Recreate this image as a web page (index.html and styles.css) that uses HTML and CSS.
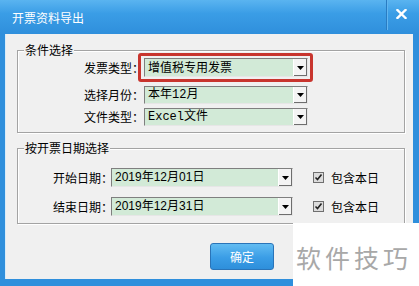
FILE: index.html
```html
<!DOCTYPE html>
<html lang="zh-CN">
<head>
  <meta charset="UTF-8">
  <title>开票资料导出</title>
  <link rel="stylesheet" href="styles.css">
</head>
<body>
  <div class="window">
    <div class="titlebar">
      <span class="title">开票资料导出</span>
      <span class="sep"></span>
      <span class="close">
        <svg width="11" height="10" viewBox="0 0 11 10"><path d="M1.5 1 L9.5 9 M9.5 1 L1.5 9" stroke="#fff" stroke-width="2.4" stroke-linecap="square"/></svg>
      </span>
    </div>

    <div class="client">
      <div class="group cond">
        <span class="group-title">条件选择</span>
        <label class="lbl">发票类型：</label>
        <div class="mark">
          <div class="combo">
            <span class="val">增值税专用发票</span>
            <span class="arrow"><svg width="7" height="4" viewBox="0 0 7 4"><path d="M0 0 H7 L3.5 4 Z" fill="#000"/></svg></span>
          </div>
        </div>
        <label class="lbl">选择月份：</label>
        <div class="combo plain">
          <span class="val mono">本年12月</span>
          <span class="arrow"><svg width="7" height="4" viewBox="0 0 7 4"><path d="M0 0 H7 L3.5 4 Z" fill="#000"/></svg></span>
        </div>
        <label class="lbl">文件类型：</label>
        <div class="combo plain">
          <span class="val mono">Excel文件</span>
          <span class="arrow"><svg width="7" height="4" viewBox="0 0 7 4"><path d="M0 0 H7 L3.5 4 Z" fill="#000"/></svg></span>
        </div>
      </div>

      <div class="group dates">
        <span class="group-title">按开票日期选择</span>
        <label class="lbl">开始日期：</label>
        <div class="combo date">
          <span class="val">2019年12月01日</span>
          <span class="arrow"><svg width="7" height="4" viewBox="0 0 7 4"><path d="M0 0 H7 L3.5 4 Z" fill="#000"/></svg></span>
        </div>
        <span class="check"><svg width="9" height="9" viewBox="0 0 9 9"><path d="M1.5 4.5 L3.5 6.5 L7.5 1.5" stroke="#222" stroke-width="1.6" fill="none"/></svg></span>
        <span class="check-text">包含本日</span>

        <label class="lbl">结束日期：</label>
        <div class="combo date">
          <span class="val">2019年12月31日</span>
          <span class="arrow"><svg width="7" height="4" viewBox="0 0 7 4"><path d="M0 0 H7 L3.5 4 Z" fill="#000"/></svg></span>
        </div>
        <span class="check"><svg width="9" height="9" viewBox="0 0 9 9"><path d="M1.5 4.5 L3.5 6.5 L7.5 1.5" stroke="#222" stroke-width="1.6" fill="none"/></svg></span>
        <span class="check-text">包含本日</span>
      </div>

      <div class="footer">
        <button class="ok">确定</button>
      </div>
    </div>

    <div class="watermark">软件技巧</div>
  </div>
</body>
</html>
```

FILE: styles.css
```css
body { margin: 0; font-family: "Noto Sans CJK SC", sans-serif; font-size: 12px; color: #000; }

.window {
  position: relative;
  width: 419px;
  height: 286px;
  background: #2f8fdc;
  display: flex;
  flex-direction: column;
  overflow: hidden;
}

/* title bar */
.titlebar {
  height: 34px;
  display: flex;
  align-items: center;
  background: linear-gradient(#5ab4f0, #3a9de6 40%, #2f8fdc);
}
.title { flex: 1; padding-left: 12px; color: #fff; font-size: 12px; }
.sep {
  align-self: flex-start;
  width: 1px;
  height: 30px;
  background: #2a7cc2;
  box-shadow: 1px 0 0 #62b6f0;
}
.close {
  align-self: flex-start;
  width: 28px;
  padding: 9px 4px 0 0;
  display: flex;
  justify-content: center;
}

/* client area */
.client {
  flex: 1;
  margin: 0 6px 7px 5px;
  padding: 16px 8px 0 12px;
  background: #f0f0f0;
  box-shadow: inset 1px 0 0 #d8ecfa;
}

.group {
  position: relative;
  border: 1px solid #a3a3a3;
  box-shadow: inset 1px 1px 0 #fff, 1px 1px 0 #fff;
}
.group-title {
  position: absolute;
  top: -9px;
  left: 6px;
  padding: 0 1px;
  background: #f0f0f0;
  line-height: 16px;
}

/* the full-width colon leaves a blank half, pull it up to the box */
.lbl { text-align: right; line-height: 18px; margin-right: -6px; }

.cond {
  display: grid;
  grid-template-columns: 120px 175px;
  row-gap: 4px;
  align-items: center;
  padding: 2px 0 6px;
}

.mark {
  border: 3px solid #c8352e;
  border-radius: 3px;
  padding: 2px 2px 2px 3px;
  height: 19px;
}
.mark .combo { height: 19px; }

.combo {
  display: flex;
  align-items: stretch;
  height: 18px;
  box-sizing: border-box;
  border: 1px solid;
  border-color: #7f7f7f #e6e6e6 #e6e6e6 #7f7f7f;
  background: #d2ead7;
}
.combo.plain { margin-left: 6px; width: 164px; }
.val { flex: 1; padding-left: 3px; line-height: 16px; white-space: nowrap; }
.mono { font-family: "Liberation Mono", "Noto Sans CJK SC", monospace; }
.arrow {
  width: 13px;
  display: flex;
  align-items: center;
  justify-content: center;
  background: #f4f4f4;
  border-left: 1px solid #fff;
  box-shadow: inset -1px -1px 0 #6e6e6e;
}

.dates {
  margin-top: 15px;
  display: grid;
  grid-template-columns: 89px 182px 11px auto;
  column-gap: 4px;
  row-gap: 10px;
  align-items: center;
  padding: 19px 0 7px;
}
.date { height: 19px; }
.date .val { font-family: "Liberation Sans", "Noto Sans CJK SC", sans-serif; line-height: 17px; }
.check {
  margin-left: 16px;
  width: 11px;
  height: 11px;
  box-sizing: border-box;
  border: 1px solid #6f6f6f;
  background: #dcdcdc;
  display: flex;
  align-items: center;
  justify-content: center;
}
.check-text { margin-left: 19px; }

.footer { padding: 19px 0 0 193px; }
.ok {
  width: 64px;
  height: 27px;
  border: 1px solid #2a74b8;
  border-radius: 3px;
  background: linear-gradient(#62bcf2, #3a9de6 55%, #2e8fdb);
  color: #fff;
  font-family: "Noto Sans CJK SC", sans-serif;
  font-size: 12px;
  padding: 0;
}

/* watermark pasted over the corner */
.watermark {
  position: absolute;
  left: 293px;
  top: 223px;
  right: 0;
  bottom: 0;
  background: #fff;
  color: #a8a8a8;
  font-size: 25px;
  letter-spacing: 4px;
  line-height: 28px;
  padding: 20px 0 0 3px;
}
```
